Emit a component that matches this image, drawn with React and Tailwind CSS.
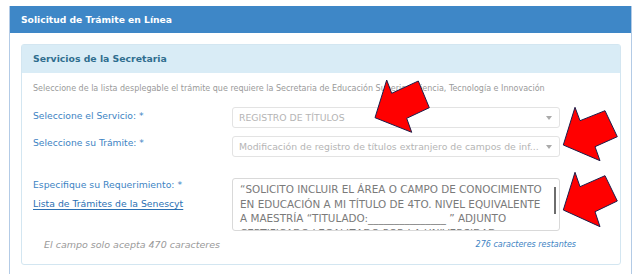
import React from "react";

const font = { fontFamily: '"DejaVu Sans", "Noto Sans", sans-serif' };

function Caret() {
  return <span className="absolute right-[7px] top-1/2 -translate-y-1/2 border-x-[3px] border-t-[4px] border-x-transparent border-t-[#aaaaaa]" />;
}

function SelectBox({ text }) {
  return (
    <div className="relative h-[21px] w-[328px] rounded-[3px] border border-[#e3e3e3] bg-white pl-[6px] pr-[20px] text-[9.3px] leading-[19px] text-[#b5b5b5] whitespace-nowrap overflow-hidden">
      {text}
      <Caret />
    </div>
  );
}

export default function App() {
  return (
    <div className="relative h-[274px] w-[638px] overflow-hidden bg-white" style={font}>
      <div className="ml-[9px] mt-[6px] w-[623px] h-[268px] border-x border-[#b3cbe6]">
        {/* encabezado */}
        <div className="h-[27px] bg-[#3e87c7] pl-[11px] text-[9.2px] font-bold leading-[27px] text-white">
          Solicitud de Trámite en Línea
        </div>
        <div className="pt-[11px] pl-[11px] pr-[11px]">
          <div className="w-[600px] rounded-[3px] border border-[#d3e6f1]">
            <div className="h-[28px] bg-[#d9ecf6] pl-[11px] text-[9.3px] font-bold leading-[28px] text-[#2f6e8f]">
              Servicios de la Secretaria
            </div>
            <div className="pl-[11px] pt-[9px] pb-[13px]">
              <p className="text-[8px] leading-[14px] text-[#9a9a9a] whitespace-nowrap">
                Seleccione de la lista desplegable el trámite que requiere la Secretaria de Educación Superior, Ciencia, Tecnología e Innovación
              </p>
              <div className="mt-[11px] flex items-start">
                <div className="w-[199px] pt-[2px] text-[9.2px] leading-[14px] text-[#3d83c3]">Seleccione el Servicio: *</div>
                <SelectBox text="REGISTRO DE TÍTULOS" />
              </div>
              <div className="mt-[8px] flex items-start">
                <div className="w-[199px] text-[9.2px] leading-[14px] text-[#3d83c3]">Seleccione su Trámite: *</div>
                <SelectBox text="Modificación de registro de títulos extranjero de campos de inf..." />
              </div>
              <div className="mt-[21px] flex items-start">
                <div className="w-[199px] text-[9.3px] leading-[14px] text-[#3d83c3]">
                  <div>Especifique su Requerimiento: *</div>
                  <div className="mt-[5px] text-[#2b70b3] underline underline-offset-2">Lista de Trámites de la Senescyt</div>
                </div>
                <div className="relative h-[53px] w-[328px] overflow-hidden rounded-[3px] border border-[#d9d9d9] bg-white pl-[7px] pt-[3px] text-[10.4px] leading-[14.5px] text-[#7a7a7a] whitespace-nowrap">
                  <div>“SOLICITO INCLUIR EL ÁREA O CAMPO DE CONOCIMIENTO</div>
                  <div>EN EDUCACIÓN A MI TÍTULO DE 4TO. NIVEL EQUIVALENTE</div>
                  <div>A MAESTRÍA “TITULADO:_______________ ” ADJUNTO</div>
                  <div>CERTIFICADO LEGALIZADO POR LA UNIVERSIDAD</div>
                  <span className="absolute right-[3px] top-[8px] h-[27px] w-[2px] bg-[#6d6d6d]" />
                </div>
              </div>
              <div className="mt-[8px] flex w-[543px] items-center justify-between pl-[11px] italic leading-[12px]">
                <span className="text-[9.5px] text-[#9a9a9a]">El campo solo acepta 470 caracteres</span>
                <span className="text-[8px] text-[#3d83c3]">276 caracteres restantes</span>
              </div>
            </div>
          </div>
        </div>
      </div>

      {/* flechas rojas */}
      <svg className="absolute left-0 top-0" width="638" height="274" viewBox="0 0 638 274">
        <polygon points="386.7,80 391.7,93.3 418.3,81 429.3,107.7 406.7,118.3 411.7,132.3 375,117.7" fill="#ff0000" stroke="#1d1d4a" strokeWidth="1" />
        <polygon points="575,107.3 580,120.7 605,110.7 617.3,136.7 595,146.7 600,160.7 563.3,145" fill="#ff0000" stroke="#1d1d4a" strokeWidth="1" />
        <polygon points="575,172.3 580,186.7 605,175.7 617.3,201 595,211.7 600,226.7 563.3,210" fill="#ff0000" stroke="#1d1d4a" strokeWidth="1" />
      </svg>
    </div>
  );
}
